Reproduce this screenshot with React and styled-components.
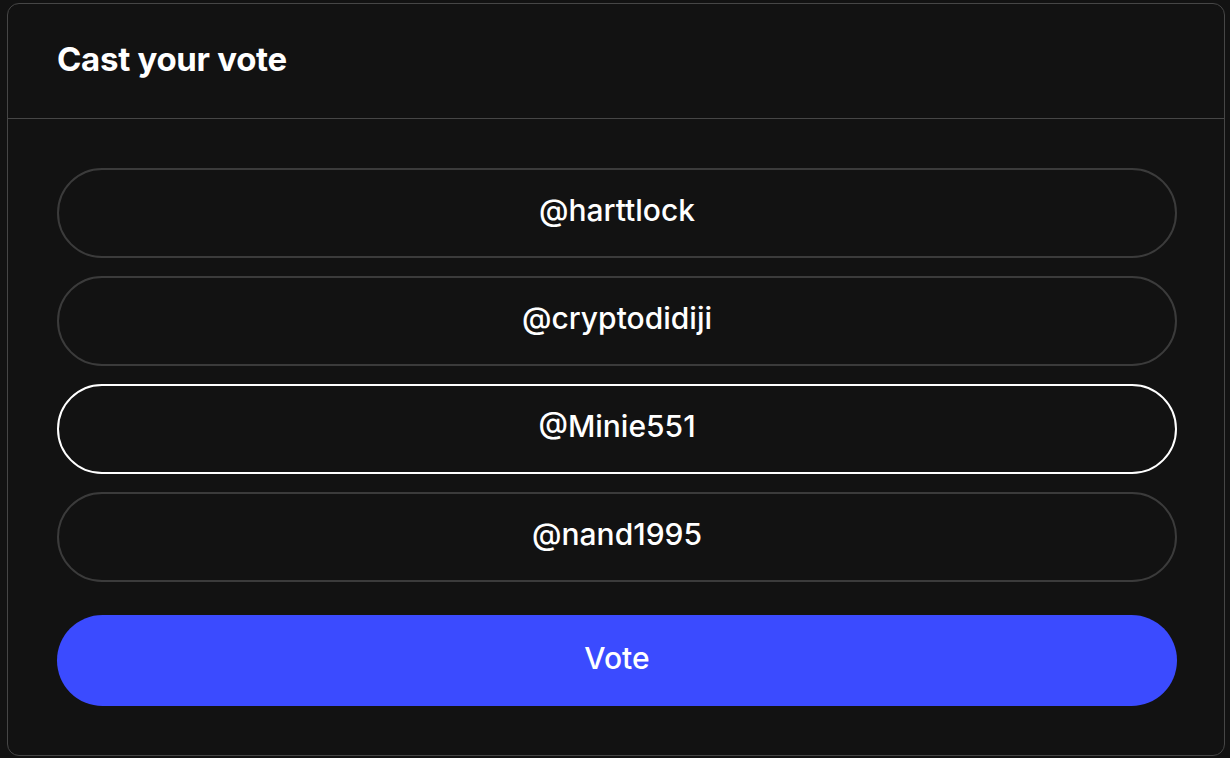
import React, { useState } from "react";
import styled, { createGlobalStyle } from "styled-components";

const Global = createGlobalStyle`
  html, body { margin: 0; padding: 0; background: #121212; }
  body { font-family: Inter, "Noto Sans", sans-serif; -webkit-font-smoothing: antialiased; }
  * { box-sizing: border-box; }
`;

const Card = styled.section`
  margin: 3px 0 0 7px;
  width: 1218px;
  height: 753px;
  border: 1px solid #464646;
  border-radius: 12px;
  background: #121212;
  display: flex;
  flex-direction: column;
`;

const Header = styled.header`
  height: 115px;
  border-bottom: 1px solid #464646;
  display: flex;
  align-items: center;
  padding: 0 49px 0 49px;
`;

const Title = styled.h2`
  margin: 0;
  color: #ffffff;
  font-size: 33px;
  font-weight: 700;
  letter-spacing: -0.3px;
  padding-bottom: 4px;
`;

const Body = styled.div`
  padding: 49px 47px 0 49px;
  display: flex;
  flex-direction: column;
`;

const Options = styled.div`
  display: flex;
  flex-direction: column;
  gap: 18px;
`;

const Option = styled.button`
  height: 90px;
  width: 100%;
  border-radius: 45px;
  background: transparent;
  border: ${(p) => (p.$selected ? "2px solid #ffffff" : "2px solid #3b3b3b")};
  color: #ffffff;
  font-family: inherit;
  font-size: 30px;
  font-weight: 500;
  display: flex;
  align-items: center;
  justify-content: center;
  cursor: pointer;
  padding: 0 0 6px;
`;

const VoteButton = styled.button`
  margin-top: 33px;
  height: 91px;
  width: 100%;
  border: none;
  border-radius: 46px;
  background: #3b4bff;
  color: #ffffff;
  font-family: inherit;
  font-size: 30px;
  font-weight: 500;
  cursor: pointer;
  padding: 0 0 6px;
`;

const names = ["@harttlock", "@cryptodidiji", "@Minie551", "@nand1995"];

export default function App() {
  const [selected, setSelected] = useState(2);
  return (
    <>
      <Global />
      <Card>
        <Header>
          <Title>Cast your vote</Title>
        </Header>
        <Body>
          <Options>
            {names.map((n, i) => (
              <Option key={n} $selected={i === selected} onClick={() => setSelected(i)}>
                {n}
              </Option>
            ))}
          </Options>
          <VoteButton>Vote</VoteButton>
        </Body>
      </Card>
    </>
  );
}
